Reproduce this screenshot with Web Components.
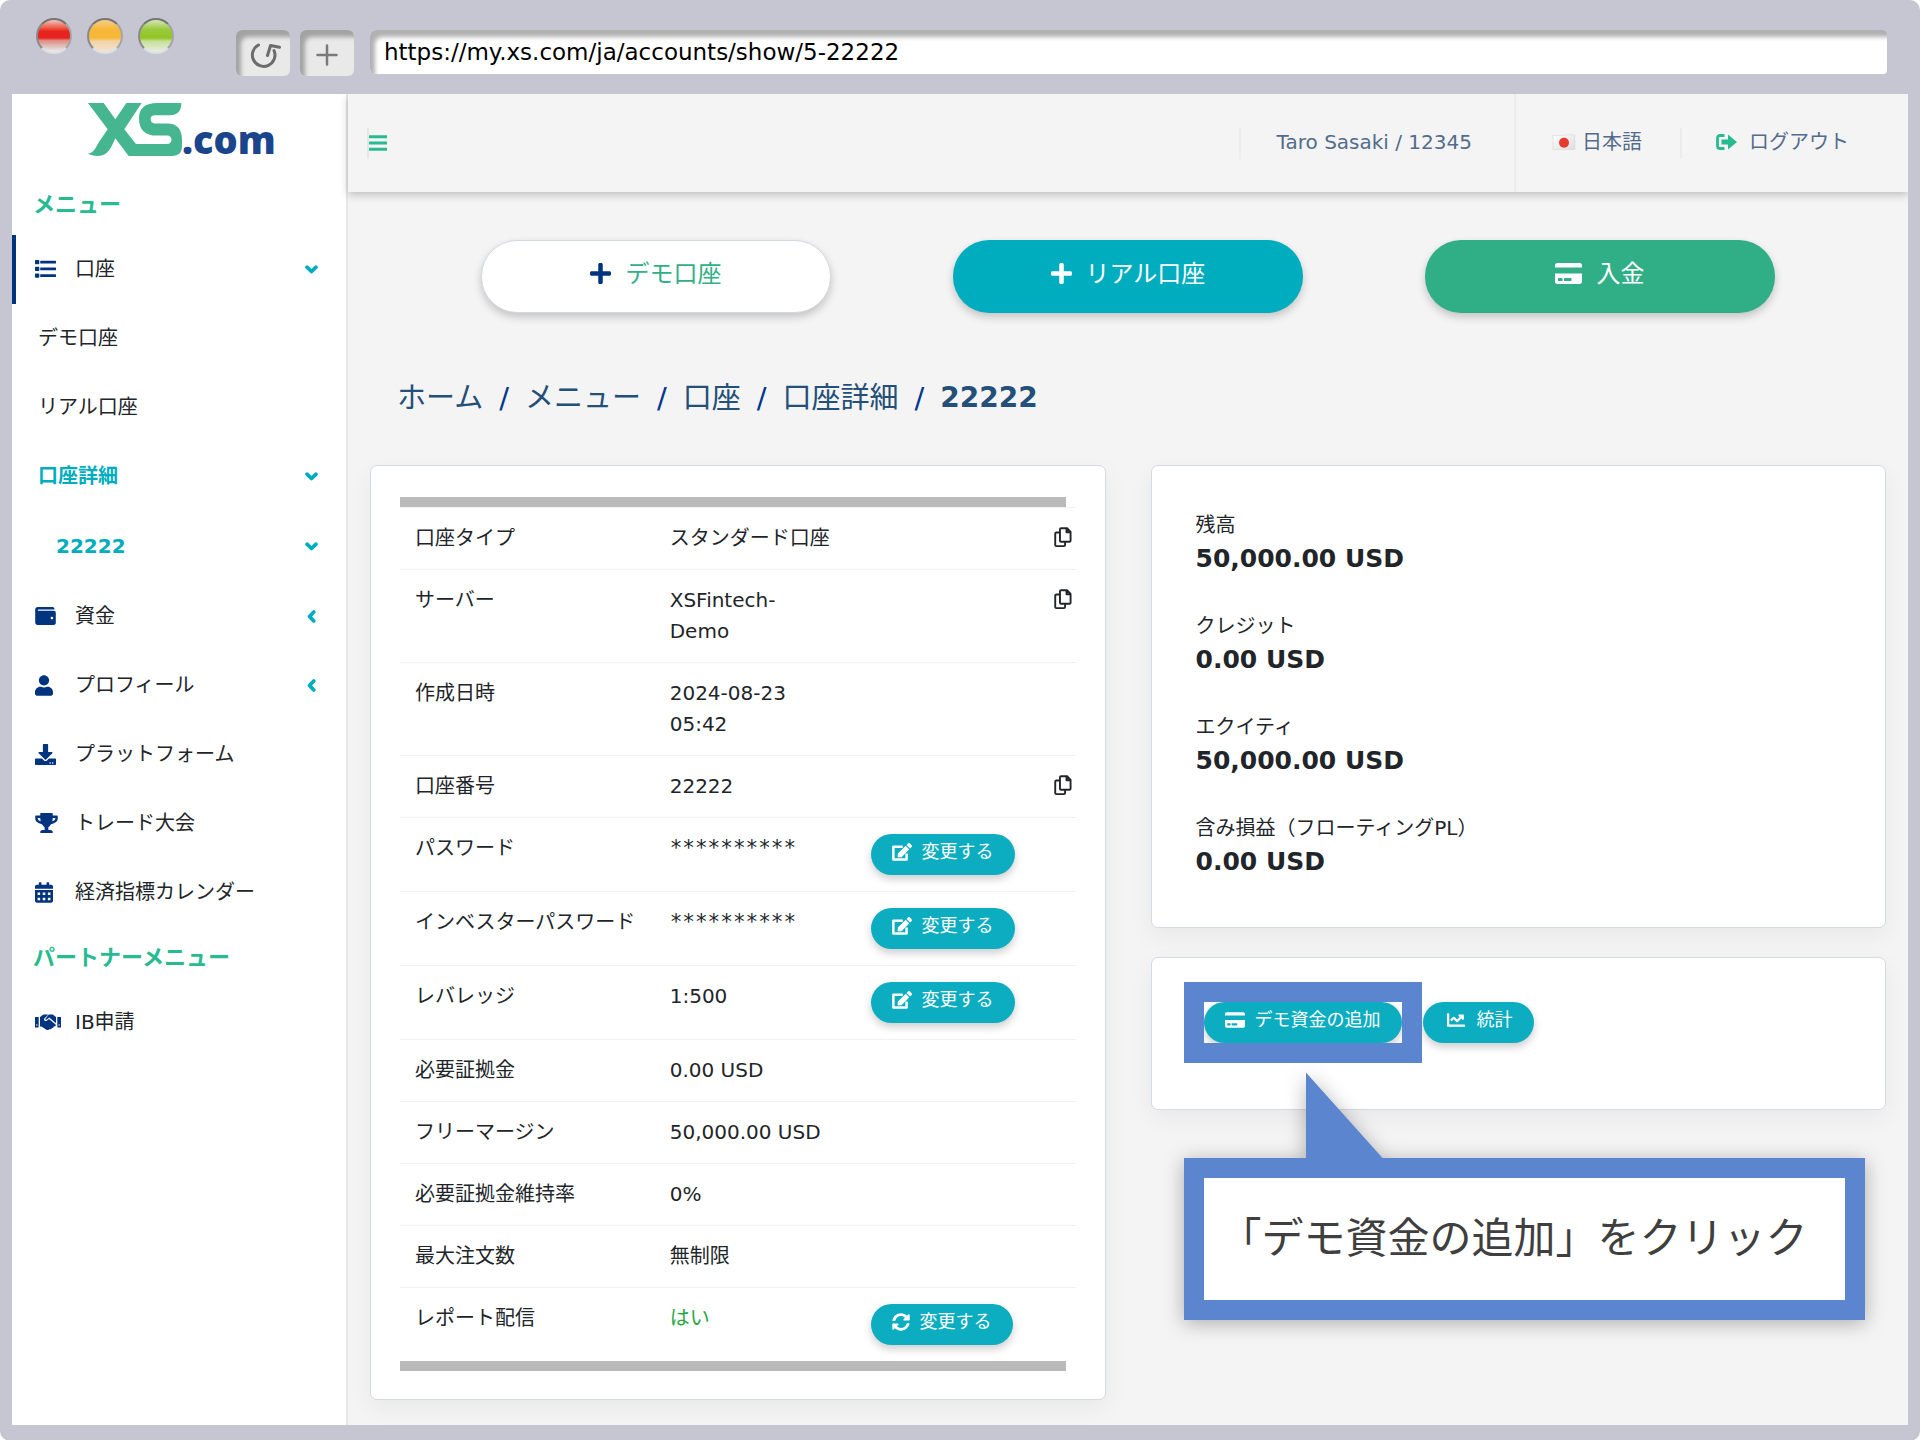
<!DOCTYPE html>
<html lang="ja">
<head>
<meta charset="utf-8">
<title>口座詳細 22222</title>
<style>
  html, body { margin: 0; background: #fff; }
  body {
    font-family: "DejaVu Sans", "Noto Sans CJK JP", sans-serif;
    font-size: 20px;
    line-height: 30px;
    color: #212529;
    --navy: #00347f;
    --teal: #00adbf;
    --green: #28bb91;
    --frame: #c6c6d3;
  }
</style>
</head>
<body>
<browser-frame url="https://my.xs.com/ja/accounts/show/5-22222">
  <side-menu slot="side">
    <menu-heading>メニュー</menu-heading>
    <menu-item icon="list" chevron="down" active>口座</menu-item>
    <menu-item level="1">デモ口座</menu-item>
    <menu-item level="1">リアル口座</menu-item>
    <menu-item level="1" chevron="down" current>口座詳細</menu-item>
    <menu-item level="2" chevron="down" current>22222</menu-item>
    <menu-item icon="wallet" chevron="left">資金</menu-item>
    <menu-item icon="user" chevron="left">プロフィール</menu-item>
    <menu-item icon="download">プラットフォーム</menu-item>
    <menu-item icon="trophy">トレード大会</menu-item>
    <menu-item icon="calendar">経済指標カレンダー</menu-item>
    <menu-heading>パートナーメニュー</menu-heading>
    <menu-item icon="handshake">IB申請</menu-item>
  </side-menu>
  <top-bar></top-bar>
  <account-page>
    <action-button slot="actions" tone="light" icon="plus">デモ口座</action-button>
    <action-button slot="actions" tone="teal" icon="plus">リアル口座</action-button>
    <action-button slot="actions" tone="green" icon="card">入金</action-button>
    <bread-crumbs slot="crumbs"></bread-crumbs>
    <panel-card slot="details"><account-table></account-table></panel-card>
    <panel-card slot="summary">
      <balance-list>
        <balance-item label="残高">50,000.00 USD</balance-item>
        <balance-item label="クレジット">0.00 USD</balance-item>
        <balance-item label="エクイティ">50,000.00 USD</balance-item>
        <balance-item label="含み損益（フローティングPL）">0.00 USD</balance-item>
      </balance-list>
    </panel-card>
    <panel-card slot="summary">
      <demo-actions>
        <highlight-box><pill-button icon="card">デモ資金の追加</pill-button></highlight-box>
        <pill-button icon="chart">統計</pill-button>
        <callout-note slot="note">「デモ資金の追加」をクリック</callout-note>
      </demo-actions>
    </panel-card>
  </account-page>
</browser-frame>

<script>
const ICONS = {
  plus: ['0 32 448 448', '<path d="M416 208H272V64c0-17.7-14.300-32-32-32h-32c-17.700 0-32 14.300-32 32v144H32c-17.700 0-32 14.300-32 32v32c0 17.700 14.300 32 32 32h144v144c0 17.700 14.300 32 32 32h32c17.700 0 32-14.300 32-32V304h144c17.700 0 32-14.300 32-32v-32c0-17.700-14.300-32-32-32z"/>'],
  list: ['0 0 21 18', '<path d="M.8 0h2.700q.8 0 .8.800v2.700q0 .8-.8.800H.8Q0 4.300 0 3.500V.8Q0 0 .8 0zM.8 6.800h2.700q.8 0 .8.800v2.700q0 .8-.8.800H.8q-.8 0-.8-.8V7.600q0-.8.800-.8zM.8 13.500h2.700q.8 0 .8.800V17q0 .8-.8.800H.8Q0 17.800 0 17v-2.700q0-.8.800-.8zM5.800.8h14.600q.6 0 .6.600v1.600q0 .6-.6.600H5.800q-.6 0-.6-.6V1.400q0-.6.600-.6zM5.800 7.500h14.600q.6 0 .6.600v1.600q0 .6-.6.600H5.800q-.6 0-.6-.6V8.100q0-.6.600-.6zM5.800 14.200h14.600q.6 0 .6.600v1.600q0 .6-.6.600H5.800q-.6 0-.6-.6v-1.600q0-.6.600-.6z"/>'],
  wallet: ['0 32 512 448', '<path d="M461.200 128H80c-8.800 0-16-7.200-16-16s7.200-16 16-16h384c8.800 0 16-7.200 16-16 0-26.500-21.500-48-48-48H64C28.700 32 0 60.700 0 96v320c0 35.300 28.700 64 64 64h397.200c28 0 50.800-21.500 50.800-48V176c0-26.500-22.800-48-50.800-48zM416 336c-17.700 0-32-14.300-32-32s14.300-32 32-32 32 14.300 32 32-14.300 32-32 32z"/>'],
  user: ['0 0 448 512', '<path d="M224 256c70.700 0 128-57.300 128-128S294.700 0 224 0 96 57.300 96 128s57.300 128 128 128zm89.600 32h-16.700c-22.200 10.200-46.900 16-72.900 16s-50.600-5.800-72.900-16h-16.700C60.200 288 0 348.200 0 422.400V464c0 26.500 21.500 48 48 48h352c26.500 0 48-21.500 48-48v-41.600c0-74.200-60.200-134.400-134.400-134.400z"/>'],
  download: ['0 0 512 512', '<path d="M216 0h80c13.300 0 24 10.700 24 24v168h87.700c17.800 0 26.700 21.500 14.100 34.100L269.700 378.300c-7.500 7.500-19.800 7.500-27.300 0L90.100 226.100c-12.600-12.600-3.700-34.100 14.100-34.100H192V24c0-13.300 10.700-24 24-24zm296 376v112c0 13.300-10.700 24-24 24H24c-13.300 0-24-10.700-24-24V376c0-13.300 10.700-24 24-24h146.700l49 49c20.100 20.100 52.500 20.100 72.600 0l49-49H488c13.300 0 24 10.700 24 24zm-124 88c0-11-9-20-20-20s-20 9-20 20 9 20 20 20 20-9 20-20zm64 0c0-11-9-20-20-20s-20 9-20 20 9 20 20 20 20-9 20-20z"/>'],
  trophy: ['0 0 576 512', '<path d="M552 64H448V24c0-13.300-10.700-24-24-24H152c-13.300 0-24 10.700-24 24v40H24C10.700 64 0 74.700 0 88v56c0 35.700 22.500 72.400 61.900 100.700 31.500 22.700 69.800 37.100 110 41.700C203.300 338.500 240 360 240 360v72h-48c-35.300 0-64 20.700-64 56v12c0 6.600 5.400 12 12 12h296c6.600 0 12-5.400 12-12v-12c0-35.300-28.700-56-64-56h-48v-72s36.700-21.500 68.100-73.600c40.300-4.600 78.600-19 110-41.700 39.300-28.300 61.900-65 61.900-100.700V88c0-13.300-10.700-24-24-24zM99.300 192.800C74.900 175.200 64 155.600 64 144v-16h64.200c1 32.600 5.800 61.200 12.800 86.200-15.100-5.200-29.200-12.400-41.700-21.400zM512 144c0 16.100-17.700 36.100-35.300 48.800-12.500 9-26.700 16.200-41.800 21.400 7-25 11.800-53.600 12.800-86.200H512v16z"/>'],
  calendar: ['0 0 448 512', '<path fill-rule="evenodd" d="M0 464c0 26.500 21.500 48 48 48h352c26.500 0 48-21.500 48-48V192H0zM64 256h64v64H64zM192 256h64v64h-64zM320 256h64v64h-64zM64 384h64v64H64zM192 384h64v64h-64zM320 384h64v64h-64zM400 64h-48V16c0-8.800-7.200-16-16-16h-32c-8.800 0-16 7.200-16 16v48H160V16c0-8.800-7.200-16-16-16h-32c-8.800 0-16 7.200-16 16v48H48C21.500 64 0 85.500 0 112v48h448v-48c0-26.500-21.500-48-48-48z"/>'],
  handshake: ['0 0 26 16', '<path fill-rule="evenodd" d="M0 3h3.700v9.500q0 1-1 1H0zM1.200 11a.7.700 0 1 0 1.400 0 .7.700 0 1 0-1.400 0zM26 3h-3.700v9.500q0 1 1 1H26zM23.400 11a.7.700 0 1 0 1.400 0 .7.700 0 1 0-1.400 0z"/><path d="M5 3l3.500-2.500h4L13 1 9.500 4.200q-1 1.300 0 2.300 1.200 1 2.500 0L14 5l6.300 5.300q.9.900.1 1.800-.6.700-1.700.3-.1 1.500-1.700 1.600-.6 1.500-2.200 1.100L13.500 16q-1.300.3-2.500-.5L6.500 12.500H5z"/><path d="M13.800.5h4L21 3v6.200L14.300 3.500 11.400 5.700q-.8.300-1-.2-.2-.4.100-.8z"/>'],
  card: ['0 32 576 448', '<path d="M0 432c0 26.500 21.500 48 48 48h480c26.500 0 48-21.500 48-48V256H0v176zm192-68c0-6.600 5.400-12 12-12h136c6.600 0 12 5.400 12 12v40c0 6.600-5.400 12-12 12H204c-6.600 0-12-5.400-12-12v-40zm-128 0c0-6.600 5.400-12 12-12h72c6.600 0 12 5.400 12 12v40c0 6.600-5.400 12-12 12H76c-6.600 0-12-5.400-12-12v-40zM576 80v48H0V80c0-26.500 21.500-48 48-48h480c26.500 0 48 21.500 48 48z"/>'],
  edit: ['0 0 576 512', '<path d="M402.600 83.200l90.200 90.200c3.800 3.800 3.800 10 0 13.800L274.400 405.600l-92.800 10.300c-12.400 1.400-22.900-9.100-21.500-21.500l10.300-92.800L388.800 83.200c3.800-3.800 10-3.800 13.800 0zm162-22.900l-48.800-48.800c-15.200-15.200-39.900-15.200-55.200 0l-35.400 35.400c-3.800 3.800-3.800 10 0 13.800l90.200 90.200c3.800 3.800 10 3.800 13.800 0l35.400-35.400c15.200-15.300 15.200-40 0-55.200z"/><path fill="none" stroke="currentColor" stroke-width="72" stroke-linejoin="round" d="M310 102H40V472H420V300"/>'],
  chart: ['0 64 512 384', '<path d="M496 384H64V80c0-8.800-7.200-16-16-16H16C7.200 64 0 71.200 0 80v336c0 17.700 14.300 32 32 32h464c8.800 0 16-7.200 16-16v-32c0-8.800-7.200-16-16-16zM464 96H345.900c-21.400 0-32 25.900-17 41l32.400 32.400L288 242.800l-73.400-73.400c-12.500-12.500-32.700-12.500-45.200 0l-68.700 68.700c-6.300 6.200-6.300 16.300 0 22.600l22.600 22.600c6.300 6.300 16.400 6.300 22.700 0L192 237.300l73.400 73.300c12.500 12.500 32.700 12.500 45.200 0l96-96 32.400 32.400c15.200 15.200 41 4.500 41-16.900V112c0-8.800-7.200-16-16-16z"/>'],
  sync: ['0 0 512 512', '<path d="M370.700 133.300C339.500 104 298.900 88 255.800 88c-77.400.1-144.300 53.200-162.700 126.900-1.400 5.300-6.200 9.100-11.700 9.100H24.100c-7.500 0-13.200-6.800-11.800-14.200C33.900 94.900 134.800 8 256 8c66.400 0 126.800 26.100 171.300 68.700L463 41c15.100-15.100 41-4.400 41 16.900V192c0 13.300-10.700 24-24 24H345.900c-21.300 0-32-25.900-16.900-41zM32 296h134.100c21.300 0 32 25.900 16.900 41l-41.700 41.700C172.500 408 213.100 424 256.200 424c77.400-.1 144.300-53.100 162.700-126.900 1.400-5.300 6.200-9.100 11.700-9.100h57.300c7.500 0 13.200 6.800 11.800 14.200C478.100 417.100 377.200 504 256 504c-66.400 0-126.800-26.100-171.300-68.700L49 471c-15.100 15.100-41 4.400-41-16.900V320c0-13.300 10.700-24 24-24z"/>'],
  copy: ['0 0 19 22', '<path fill="none" stroke="currentColor" stroke-width="2" stroke-linejoin="round" d="M7.500 1.200h6.300L17.500 5v9.300q0 1.200-1.200 1.200H7.500q-1.200 0-1.200-1.200V2.400q0-1.200 1.200-1.200zM13.200 1.500v4h4M6 5.700H2.500q-1.200 0-1.200 1.200v12q0 1.200 1.200 1.200h8q1.200 0 1.200-1.200V16"/>'],
  down: ['0 0 13 9', '<path fill="none" stroke="currentColor" stroke-width="3.800" stroke-linecap="round" stroke-linejoin="round" d="M2 2.200L6.500 6.500 11 2.200"/>'],
  left: ['0 0 9 13', '<path fill="none" stroke="currentColor" stroke-width="3.800" stroke-linecap="round" stroke-linejoin="round" d="M6.800 2L2.500 6.500 6.800 11"/>'],
  bars: ['0 0 18 16', '<path d="M0 .2h18v3H0zM0 6.500h18v3H0zM0 12.800h18v3H0z"/>'],
  logout: ['0 0 21 16', '<path fill="none" stroke="currentColor" stroke-width="2.800" d="M8.500 1.500H4Q1.500 1.500 1.500 4v8q0 2.500 2.500 2.500h4.500"/><path d="M5.500 5.500H12V.6L21 8l-9 7.400v-4.900H5.500z"/>'],
  flag: ['0 0 24 17', '<defs><linearGradient id="w" x2="1" y2="1"><stop offset="0" stop-color="#fff"/><stop offset="1" stop-color="#dcdcdc"/></linearGradient></defs><path fill="url(#w)" stroke="#d9d9d9" stroke-width=".6" d="M1 1.500Q6 2 12 1.200T23 1v14.500q-6 .3-11 0T1 16z"/><circle cx="12" cy="8.700" r="5" fill="#e8392f"/>'],
  reload: ['-2 0 32 28', '<path fill="none" stroke="#6c6c6c" stroke-width="3" stroke-linecap="round" stroke-linejoin="round" d="M9.500 4A11.300 11.300 0 1 0 25 9.500M18.500 14.500L21.500 4.500l9 1.700"/>'],
  cross: ['0 0 22 22', '<path fill="none" stroke="#7a7a7a" stroke-width="2.500" stroke-linecap="round" d="M11 1.500v19M1.500 11h19"/>']
};

/* Base: each element supplies its markup through view() and gets it in an open shadow root. */
class Base extends HTMLElement {
  connectedCallback() {
    if (this.shadowRoot) return;
    const t = document.createElement('template');
    t.innerHTML = `<style>*{box-sizing:border-box}:host{display:block}a{color:inherit;text-decoration:none}button{font:inherit;border:0;cursor:pointer}</style>` + this.view();
    this.attachShadow({ mode: 'open' }).append(t.content.cloneNode(true));
  }
  a(n) { return this.getAttribute(n) || ''; }
}
const define = (name, view) => customElements.define(name, class extends Base { view() { return view(this); } });

define('svg-icon', el => {
  const [box, body] = ICONS[el.a('name')];
  const [, , w, h] = box.split(' ').map(Number);
  const width = Number(el.a('width'));
  return `<style>:host{display:inline-flex;flex:none}svg{display:block;fill:currentColor;overflow:visible}</style>
  <svg viewBox="${box}" width="${width}" height="${Math.round(width * h / w)}" aria-hidden="true">${body}</svg>`;
});

define('browser-frame', el => `<style>
  :host{display:flex;flex-direction:column;min-height:100vh;box-sizing:border-box;background:var(--frame);border-radius:10px;padding:0 12px 16px}
  header{display:flex;align-items:flex-start;height:94px;padding:18px 21px 0 24px}
  .lights{display:flex;gap:15px;margin-right:62px}
  .lights i{width:36px;height:36px;border-radius:50%;border:2px solid;border-color:#757575 #a5a5a5 #dedee6 #8a8a8a}
  .r{background:linear-gradient(#f4c3bb,#ec4a35 28%,#e8221f 36%,#e8221f 56%,#e08a80 64%,#dfc9c6 85%,#eee)}
  .y{background:linear-gradient(#f5cd8a,#f7b738 30%,#f7b738 56%,#f2d3a4 66%,#f0e4d4)}
  .g{background:linear-gradient(#d6e6b4,#98ca3c 30%,#93c524 56%,#c6df9a 66%,#e8eee0)}
  .tools{display:flex;flex:1;gap:10px;margin-top:12px}
  .tools button{width:54px;height:46px;padding:4px 0 0;border-radius:6px;background:#e9e9e9;box-shadow:inset 6px 8px 4px -1px #a3a3a3;display:grid;place-items:center}
  input{flex:1;min-width:0;height:44px;margin-left:6px;border:0;border-radius:6px 4px 4px 6px;background:#fff;box-shadow:inset 6px 8px 4px -1px #b1b1b1;padding:0 14px;font:23px "DejaVu Sans",sans-serif;color:#000}
  .body{display:flex;flex:1;background:#f4f4f4;overflow:hidden}
  main{flex:1;min-width:0}
  </style>
  <header>
    <div class="lights"><i class="r"></i><i class="y"></i><i class="g"></i></div>
    <div class="tools">
      <button aria-label="再読み込み"><svg-icon name="reload" width="32"></svg-icon></button>
      <button aria-label="新しいタブ"><svg-icon name="cross" width="22"></svg-icon></button>
      <input type="text" aria-label="URL" value="${el.a('url')}">
    </div>
  </header>
  <div class="body"><slot name="side"></slot><main><slot></slot></main></div>`);

define('side-menu', () => `<style>
  :host{width:336px;flex:none;box-sizing:border-box;background:#fff;border-right:2px solid #e7e7e7}
  .logo{display:flex;align-items:flex-start;height:80px;padding:9px 0 0 76px;color:#1a458c}
  .logo span{font:800 38px/53px "Open Sans",sans-serif;padding-top:10px}
  </style>
  <a class="logo" href="#"><svg width="94" height="53" viewBox="0 0 282 156" preserveAspectRatio="none" fill="#45b690"><path d="M0 0H47L82 48L115 0H161L109 77L144 121H238a12.500 12.500 0 0 0 0-25H206C172 96 153 78 153 46S172 0 208 0H280C280 25 268 36 246 36H200a12 12 0 0 0 0 24H238C268 60 282 78 282 108V126C282 146 272 156 252 156H122L82 104C70 130 60 156 30 156C16 156 6 154 0 149C18 146 24 130 32 116L59 77Z"/></svg><span>.com</span></a>
  <nav><slot></slot></nav>`);

define('menu-heading', () => `<style>:host{padding-left:21px;height:61px;line-height:61px;font-size:22px;font-weight:bold;color:var(--green)}</style><slot></slot>`);

const iconWidth = { list: 21, wallet: 21, user: 18, download: 21, trophy: 23, calendar: 18, handshake: 26 };
define('menu-item', el => `<style>
  a{display:flex;align-items:center;height:69px;padding:0 28px 1px 23px;color:#212529}
  :host([active]){border-left:4px solid var(--navy)}
  :host([active]) a{padding-left:19px}
  :host([level="1"]) a{padding-left:26px}
  :host([level="2"]) a{padding-left:44px;height:71px}
  :host([current]) a{color:var(--teal);font-weight:bold}
  .ico{width:40px;color:var(--navy);display:flex}
  .text{flex:1}
  .chev{width:13px;display:flex;justify-content:center;color:var(--teal)}
  </style>
  <a href="#">${el.a('icon') ? `<span class="ico"><svg-icon name="${el.a('icon')}" width="${iconWidth[el.a('icon')]}"></svg-icon></span>` : ''}
  <span class="text"><slot></slot></span>
  ${el.a('chevron') ? `<span class="chev"><svg-icon name="${el.a('chevron')}" width="${el.a('chevron') === 'down' ? 13 : 9}"></svg-icon></span>` : ''}</a>`);

define('top-bar', () => `<style>
  :host{display:flex;align-items:center;height:98px;box-shadow:0 3px 8px rgba(0,0,0,.22);color:#536c8b;position:relative;background:#f4f4f4}
  .menu{background:none;color:var(--green);padding:0;height:31px;margin-left:19px;border-left:2px solid #e6e6e6;display:flex;align-items:center}
  nav{display:flex;margin-left:auto;align-self:stretch;align-items:center}
  a{display:flex;align-items:center;height:31px;padding:0 42px 2px 36px;border-left:2px solid #ececec}
  .lang{align-self:stretch;height:auto;gap:6px;padding-right:38px}
  .out{gap:12px;padding-left:34px;padding-right:59px}
  .out svg-icon{color:var(--green)}
  </style>
  <button class="menu" aria-label="メニュー"><svg-icon name="bars" width="18"></svg-icon></button>
  <nav>
    <a href="#">Taro Sasaki / 12345</a>
    <a href="#" class="lang"><svg-icon name="flag" width="24"></svg-icon>日本語</a>
    <a href="#" class="out"><svg-icon name="logout" width="21"></svg-icon>ログアウト</a>
  </nav>`);

define('account-page', () => `<style>
  :host{padding:48px 22px 25px}
  .actions{display:grid;grid-template-columns:repeat(3,1fr);padding:0 50px;justify-items:center}
  .crumbs{padding:65px 0 47px 27px}
  .cols{display:grid;grid-template-columns:1fr 1fr;gap:45px;align-items:start}
  .col{display:grid;gap:29px}
  </style>
  <div class="actions"><slot name="actions"></slot></div>
  <div class="crumbs"><slot name="crumbs"></slot></div>
  <div class="cols"><slot name="details"></slot><div class="col"><slot name="summary"></slot></div></div>`);

define('action-button', el => `<style>
  :host{width:74%}
  button{display:flex;width:100%;height:73px;align-items:center;justify-content:center;gap:14px;padding:0 0 6px;border-radius:36px;font-size:24px;color:#fff;box-shadow:0 4px 8px rgba(0,0,0,.2)}
  :host([tone="light"]) button{background:#fff;color:#31b086;border:1px solid #d3d7e2}
  :host([tone="light"]) svg-icon{color:#00347f}
  :host([tone="teal"]) button{background:#00adbf}
  :host([tone="green"]) button{background:#30af86}
  </style><button><svg-icon name="${el.a('icon')}" width="${el.a('icon') === 'card' ? 27 : 21}"></svg-icon><span><slot></slot></span></button>`);

define('bread-crumbs', () => `<style>
  ol{display:flex;gap:16px;margin:0;padding:0;list-style:none;font-size:29px;line-height:40px;color:#234f78}
  li+li{display:flex;gap:16px}
  li+li::before{content:"/";color:#00378a}
  strong{font-size:28px}
  </style><nav><ol><li><a href="#">ホーム</a></li><li><a href="#">メニュー</a></li><li><a href="#">口座</a></li><li><a href="#">口座詳細</a></li><li><strong>22222</strong></li></ol></nav>`);

define('panel-card', () => `<style>:host{background:#fff;border:1px solid #d5d9e1;border-radius:7px;box-shadow:0 8px 24px rgba(0,0,0,.05)}</style><slot></slot>`);

define('pill-button', el => `<style>
  :host{display:inline-block}
  button{display:flex;align-items:center;gap:10px;height:41px;padding:0 21px 6px;border-radius:21px;background:#0cadc0;color:#fff;font-size:18px;box-shadow:0 4px 8px rgba(0,0,0,.2);white-space:nowrap}
  :host([icon="chart"]) button{padding-left:24px;gap:12px}
  </style><button><svg-icon name="${el.a('icon')}" width="${{ edit: 20, card: 20, chart: 18, sync: 18 }[el.a('icon')]}"></svg-icon><span><slot></slot></span></button>`);

const ROWS = [
  ['口座タイプ', 'スタンダード口座', '', 1],
  ['サーバー', 'XSFintech-Demo', '', 1],
  ['作成日時', '2024-08-23 05:42'],
  ['口座番号', '22222', '', 1],
  ['パスワード', '**********', 'edit'],
  ['インベスターパスワード', '**********', 'edit'],
  ['レバレッジ', '1:500', 'edit'],
  ['必要証拠金', '0.00 USD'],
  ['フリーマージン', '50,000.00 USD'],
  ['必要証拠金維持率', '0%'],
  ['最大注文数', '無制限'],
  ['レポート配信', 'はい', 'sync']
];
define('account-table', () => `<style>
  :host{padding:31px 29px 28px}
  .bar{height:10px;background:#bababa;margin-right:10px}
  table{width:100%;border-collapse:collapse;table-layout:fixed;line-height:31px}
  th,td{font-weight:normal;text-align:left;vertical-align:top;padding:15px 0 15px 15px;border-top:1px solid #f1f1f1}
  th{width:38%;white-space:nowrap}
  .val{width:29%;padding-left:13px;padding-right:19px}
  .mask{font-family:"DejaVu Sans Mono",monospace;font-size:21px}
  .act{padding:16px 0 16px 18px;width:26%}
  .copy{padding-right:4px;padding-bottom:0}
  .copy button{background:none;padding:4px 0 0;margin-left:auto;color:#212529;display:flex}
  .yes{color:#28a745}
  pill-button{display:block;width:max-content}
  </style>
  <div class="bar"></div>
  <table><tbody>${ROWS.map(([k, v, act, copy]) => `<tr><th scope="row">${k}</th><td class="val${v === 'はい' ? ' yes' : v[0] === '*' ? ' mask' : ''}">${v}</td><td class="act">${act ? `<pill-button icon="${act}">変更する</pill-button>` : ''}</td><td class="copy">${copy ? '<button aria-label="コピー"><svg-icon name="copy" width="18"></svg-icon></button>' : ''}</td></tr>`).join('')}</tbody></table>
  <div class="bar"></div>`);

define('balance-list', () => `<style>:host{display:grid;gap:33px;padding:43px 44px 47px}</style><slot></slot>`);
define('balance-item', el => `<style>.l{line-height:32px}.v{font-size:25px;line-height:36px;font-weight:bold}</style><div class="l">${el.a('label')}</div><div class="v"><slot></slot></div>`);

define('demo-actions', () => `<style>
  :host{position:relative;height:151px;box-sizing:border-box;padding:44px 52px}
  .row{display:flex;align-items:flex-start;gap:21px}
  </style><div class="row"><slot></slot></div><slot name="note"></slot>`);

define('highlight-box', () => `<style>
  :host{position:relative;display:flex}
  .ring{position:absolute;inset:-20px;border:20px solid #5b86cf;pointer-events:none}
  </style><slot></slot><div class="ring"></div>`);

define('callout-note', () => `<style>
  :host{position:absolute;top:200px;left:32px;right:20px;filter:drop-shadow(0 3px 10px rgba(0,0,0,.3))}
  .box{border:20px solid #5b86cf;background:#fff;padding:31px 16px;font-size:42px;line-height:60px;color:#3f3f3f;white-space:nowrap}
  .tail{position:absolute;left:122px;bottom:100%;width:77px;height:86px;background:#5b86cf;clip-path:polygon(0 0,0 100%,100% 100%)}
  </style><div class="tail"></div><div class="box"><slot></slot></div>`);
</script>
</body>
</html>
